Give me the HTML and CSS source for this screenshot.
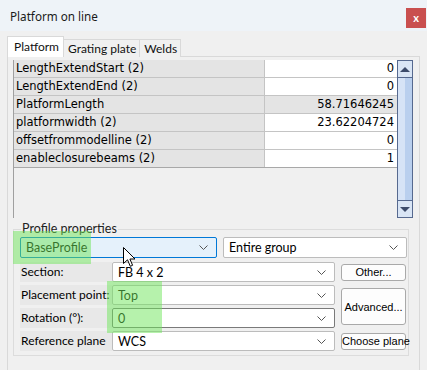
FILE: index.html
```html
<!DOCTYPE html>
<html lang="en">
<head>
  <meta charset="UTF-8">
  <title>Platform on line</title>
  <link rel="stylesheet" href="styles.css">
</head>
<body>
<div class="dialog">
  <div class="titlebar">
    <span class="title">Platform on line</span>
    <span class="close">x</span>
  </div>

  <div class="tabs">
    <div class="tab active">Platform</div>
    <div class="tab">Grating plate</div>
    <div class="tab">Welds</div>
  </div>

  <div class="panel">
    <div class="grid-wrap">
      <div class="grid">
        <div class="row"><div class="name">LengthExtendStart (2)</div><div class="value">0</div></div>
        <div class="row"><div class="name">LengthExtendEnd (2)</div><div class="value">0</div></div>
        <div class="row"><div class="name">PlatformLength</div><div class="value ro">58.71646245</div></div>
        <div class="row"><div class="name">platformwidth (2)</div><div class="value">23.62204724</div></div>
        <div class="row"><div class="name">offsetfrommodelline (2)</div><div class="value">0</div></div>
        <div class="row"><div class="name">enableclosurebeams (2)</div><div class="value">1</div></div>
      </div>
      <div class="scrollbar">
        <div class="sb-btn"><span class="arr up"></span></div>
        <div class="sb-track"></div>
        <div class="sb-btn"><span class="arr down"></span></div>
      </div>
    </div>

    <fieldset class="group">
      <legend>Profile properties</legend>
      <div class="top-row">
        <div class="combo hot">BaseProfile<svg class="chev" width="9" height="5"><polyline points="0.5,0.5 4.5,4.5 8.5,0.5" fill="none" stroke="#555" stroke-width="1"/></svg></div>
        <div class="combo">Entire group<svg class="chev" width="9" height="5"><polyline points="0.5,0.5 4.5,4.5 8.5,0.5" fill="none" stroke="#555" stroke-width="1"/></svg></div>
      </div>
      <div class="form">
        <div class="lbl">Section:</div>
        <div class="combo">FB 4 x 2<svg class="chev" width="9" height="5"><polyline points="0.5,0.5 4.5,4.5 8.5,0.5" fill="none" stroke="#555" stroke-width="1"/></svg></div>
        <div class="btn-cell"><button class="btn">Other...</button></div>

        <div class="lbl">Placement point:</div>
        <div class="combo">Top<svg class="chev" width="9" height="5"><polyline points="0.5,0.5 4.5,4.5 8.5,0.5" fill="none" stroke="#555" stroke-width="1"/></svg></div>
        <div class="btn-cell tall"><button class="btn">Advanced...</button></div>

        <div class="lbl">Rotation (°):</div>
        <div class="combo edit">0<svg class="chev" width="9" height="5"><polyline points="0.5,0.5 4.5,4.5 8.5,0.5" fill="none" stroke="#555" stroke-width="1"/></svg></div>

        <div class="lbl">Reference plane</div>
        <div class="combo">WCS<svg class="chev" width="9" height="5"><polyline points="0.5,0.5 4.5,4.5 8.5,0.5" fill="none" stroke="#555" stroke-width="1"/></svg></div>
        <div class="btn-cell"><button class="btn">Choose plane</button></div>
      </div>
    </fieldset>
  </div>

  <!-- annotation overlays -->
  <div class="mark mark-a"></div>
  <div class="mark mark-b"></div>
  <svg class="cursor" width="13" height="21" viewBox="0 0 13 21">
    <path d="M0.5,0.5 L0.5,16.5 L4.5,12.8 L7.3,19.3 L9.6,18.3 L6.9,12 L12,12 Z" fill="#fff" stroke="#000" stroke-width="1"/>
  </svg>
</div>
</body>
</html>
```

FILE: styles.css
```css
body {
  margin: 0;
  background: #f0f0f0;
  font-family: Lato, "Liberation Sans", sans-serif;
  font-size: 12px;
  color: #000;
}
.dialog {
  position: relative;
  width: 427px;
  height: 370px;
  background: #f0f0f0;
  overflow: hidden;
}
.titlebar {
  height: 31px;
  background: #eef3f8;
  display: flex;
  align-items: center;
  justify-content: space-between;
  padding: 0 1px 0 10px;
}
.title {
  font-family: "Noto Sans", sans-serif;
  font-size: 11.7px;
  color: #1a1a1a;
}
.close {
  width: 20px;
  height: 20px;
  margin-top: 4px;
  background: #c94f4f;
  color: #fff;
  font-weight: bold;
  font-size: 11px;
  display: flex;
  align-items: center;
  justify-content: center;
}
.tabs {
  display: flex;
  align-items: flex-end;
  height: 26px;
  padding-left: 7px;
}
.tab {
  height: 17px;
  line-height: 18px;
  padding: 0 3px 0 4px;
  border: 1px solid #d9d9d9;
  border-bottom: none;
  margin-left: -1px;
  background: #f0f0f0;
  color: #111;
  font-size: 12px;
}
.tab.active {
  height: 20px;
  line-height: 19px;
  background: #fff;
  padding: 0 4px 0 6px;
  margin-left: 0;
  position: relative;
  z-index: 1;
}
.panel {
  margin: -1px 7px 0 7px;
  height: 310px;
  border: 1px solid #d9d9d9;
  background: #f0f0f0;
  padding: 3px 0 0 5px;
}
.grid-wrap {
  display: flex;
  height: 158px;
}
.grid {
  width: 383px;
  border-left: 1px solid #a0a0a0;
  font-family: "DejaVu Sans", sans-serif;
  font-size: 11.5px;
}
.row {
  display: flex;
  height: 17px;
  border-bottom: 1px solid #c4c4c4;
}
.row:last-child {
  border-bottom-color: #a8a8a8;
}
.name {
  width: 248px;
  background: #e4e4e4;
  border-right: 1px solid #c4c4c4;
  padding-left: 2px;
  line-height: 17px;
  white-space: nowrap;
}
.value {
  flex: 1;
  background: #fff;
  text-align: right;
  padding-right: 3px;
  line-height: 17px;
}
.value.ro {
  background: #e4e4e4;
}
.scrollbar {
  width: 14px;
  border: 1px solid #56698f;
  display: flex;
  flex-direction: column;
  background: #c9daf1;
}
.sb-btn {
  height: 16px;
  background: #d9e5f5;
  display: flex;
  align-items: center;
  justify-content: center;
}
.sb-btn:first-child {
  border-bottom: 1px solid #56698f;
}
.sb-btn:last-child {
  border-top: 1px solid #56698f;
}
.sb-track {
  flex: 1;
  background: linear-gradient(to right, #d6e3f6 50%, #b9cfee 50%);
}
.arr {
  width: 0;
  height: 0;
  border-left: 5px solid transparent;
  border-right: 5px solid transparent;
}
.arr.up {
  border-bottom: 5px solid #3c4b6b;
}
.arr.down {
  border-top: 5px solid #3c4b6b;
}
.group {
  margin: 4px 0 0 0;
  width: 396px;
  height: 134px;
  box-sizing: border-box;
  border: 1px solid #dcdcdc;
  padding: 1px 0 0 6px;
}
.group legend {
  padding: 0 1px;
  margin-left: 1px;
  line-height: 14px;
  font-size: 12.5px;
  color: #222;
}
.top-row {
  display: flex;
  gap: 6px;
}
.combo {
  box-sizing: border-box;
  height: 20px;
  border: 1px solid #bcbcbc;
  border-radius: 2px;
  background: #fff;
  display: flex;
  align-items: center;
  justify-content: space-between;
  padding: 0 8px 0 5px;
  font-size: 12.5px;
}
.top-row .combo {
  width: 184px;
  height: 21px;
}
.top-row .combo.hot {
  width: 197px;
  border-color: #0078d7;
  background: #e5f1fb;
}
.form {
  display: grid;
  grid-template-columns: 92px 223px 71px;
  grid-auto-rows: 20px;
  row-gap: 3px;
  margin-top: 4px;
}
.form .combo.edit {
  border-color: #7a7a7a;
}
.lbl {
  background: #e8e8e8;
  padding-left: 1px;
  line-height: 20px;
  font-size: 12px;
  white-space: nowrap;
}
.btn-cell {
  display: flex;
  align-items: center;
  padding-left: 6px;
}
.btn-cell.tall {
  grid-row: span 2;
}
.btn {
  width: 65px;
  height: 17px;
  border: 1px solid #a9a9a9;
  border-radius: 3px;
  background: #fdfdfd;
  font-family: "Liberation Sans", Arial, sans-serif;
  font-size: 11px;
  padding: 0;
  color: #000;
  white-space: nowrap;
}
.btn-cell.tall .btn {
  height: 37px;
}
.mark {
  position: absolute;
  background: rgba(110, 230, 90, 0.5);
}
.mark-a {
  left: 13px;
  top: 231px;
  width: 78px;
  height: 33px;
}
.mark-b {
  left: 107px;
  top: 281px;
  width: 55px;
  height: 52px;
}
.cursor {
  position: absolute;
  left: 123px;
  top: 247px;
}
```
